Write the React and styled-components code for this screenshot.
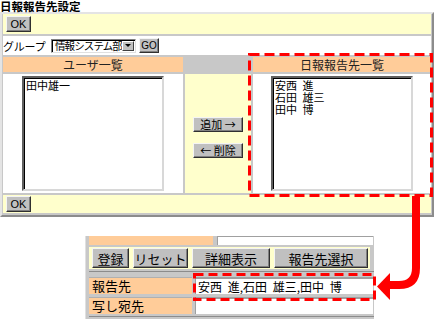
import React from "react";
import styled, { createGlobalStyle } from "styled-components";

const GlobalStyle = createGlobalStyle`
  html, body {
    margin: 0;
    padding: 0;
    background: #fff;
  }
  body {
    font-family: "Noto Sans CJK JP", "Noto Sans", sans-serif;
    font-size: 12px;
    color: #000;
  }
`;

const Page = styled.div`
  position: relative;
  width: 435px;
  height: 319px;
  overflow: hidden;
`;

const Title = styled.h1`
  margin: 0;
  height: 12px;
  font-size: 11.5px;
  line-height: 12px;
  font-weight: bold;
`;

//Main form table
const Panel = styled.div`
  box-sizing: border-box;
  width: 434px;
  border: 2px solid;
  border-color: #e4e4e4 #8c8c8c #8c8c8c #e4e4e4;
  background: #c8c8c8;
  padding: 0 1px 2px 1px;
  display: grid;
  grid-template-columns: 180px 66px 178px;
  grid-template-rows: 20px 19px 15px 119px 18px;
  gap: 2px;
`;

const BarRow = styled.div`
  grid-column: 1 / -1;
  background: #ffffcc;
  display: flex;
  align-items: center;
  padding-left: 3px;
`;

const GroupRow = styled.div`
  grid-column: 1 / -1;
  background: #fff;
  display: flex;
  align-items: center;
  gap: 3px;
`;

const GroupLabel = styled.span`
  font-size: 11px;
  letter-spacing: -0.2px;
  width: 45px;
`;

const Select = styled.div`
  box-sizing: border-box;
  width: 85px;
  height: 14px;
  background: #fff;
  border: 1px solid;
  border-color: #808080 #e0e0e0 #e0e0e0 #808080;
  box-shadow: inset 1px 1px #000;
  display: flex;
  align-items: center;
  justify-content: space-between;
  padding: 0 1px 0 3px;
`;

const SelectText = styled.span`
  font-size: 10.5px;
  letter-spacing: -0.9px;
  line-height: 12px;
`;

const SelectArrow = styled.span`
  box-sizing: border-box;
  width: 12px;
  height: 10px;
  background: #c0c0c0;
  border: 1px solid;
  border-color: #fff #404040 #404040 #fff;
  display: flex;
  align-items: center;
  justify-content: center;

  &::after {
    content: "";
    border-left: 3px solid transparent;
    border-right: 3px solid transparent;
    border-top: 3px solid #000;
  }
`;

const Btn = styled.button`
  box-sizing: border-box;
  margin: 0;
  padding: 0;
  width: ${(p) => p.$w}px;
  height: ${(p) => p.$h}px;
  font-family: ${(p) =>
    p.$latin
      ? '"Liberation Sans", Arial, sans-serif'
      : '"Noto Sans CJK JP", sans-serif'};
  font-size: ${(p) => p.$size || 11}px;
  line-height: 1;
  color: #000;
  background: #c0c0c0;
  border: 1px solid;
  border-color: #f4f4f4 #303030 #303030 #f4f4f4;
  box-shadow: inset -1px -1px #808080;
  white-space: nowrap;
`;

const Head = styled.div`
  background: ${(p) => (p.$blank ? "transparent" : "#ffcc99")};
  text-align: center;
  font-size: 12px;
  line-height: 15px;
  color: #222;
`;

const ListCell = styled.div`
  background: #fff;
  display: flex;
  justify-content: center;
  align-items: center;
`;

const ListBox = styled.div`
  box-sizing: border-box;
  width: 142px;
  height: 115px;
  background: #fff;
  border: 2px solid;
  border-color: #606060 #d8d8d8 #d8d8d8 #606060;
  box-shadow: inset 1px 1px #000;
  padding: 1px 0 0 2px;
  font-size: 11px;
  line-height: 12px;
  word-spacing: 3px;
`;

const Item = styled.div`
  height: 12px;
  white-space: nowrap;
`;

const MoveCell = styled.div`
  background: #ffffcc;
  display: flex;
  flex-direction: column;
  align-items: center;
  padding-top: 43px;
  gap: 11px;
`;

//Lower screen piece
const SubPanel = styled.div`
  box-sizing: border-box;
  margin: 19px 0 0 85px;
  width: 289px;
  background: #c8c8c8;
  border-left: 1px solid #e0e0e0;
  padding: 0 0 4px 3px;
`;

const TopStrip = styled.div`
  display: grid;
  grid-template-columns: 124px 156px;
  column-gap: 4px;
  height: 9px;
`;

const Cut = styled.div`
  background: ${(p) => (p.$white ? "#fff" : "#ffcc99")};
  border-top: ${(p) => (p.$white ? "1px solid #a0a0a0" : "none")};
  border-left: ${(p) => (p.$white ? "1px solid #a0a0a0" : "none")};
`;

const ButtonBar = styled.div`
  margin-top: 2px;
  background: #ffffcc;
  height: 22px;
  display: flex;
  align-items: center;
  gap: 4px;
  padding-left: 3px;
  width: 281px;
  box-sizing: border-box;
`;

const Fields = styled.div`
  margin-top: 2px;
  border-top: 1px solid #8c8c8c;
  padding: 5px 0 2px;
  border-bottom: 1px solid #8c8c8c;
  display: grid;
  grid-template-columns: 103px 178px;
  grid-auto-rows: 17px;
  gap: 3px;
`;

const Label = styled.div`
  background: #ffcc99;
  border-top: 1px solid #b0b0b0;
  font-size: 13px;
  line-height: 16px;
  padding-left: 3px;
`;

const Value = styled.div`
  background: #fff;
  border-top: 2px solid #a0a0a0;
  border-left: 1px solid #a0a0a0;
  font-size: 12px;
  line-height: 15px;
  padding-left: 2px;
  word-spacing: 3px;
  white-space: nowrap;
`;

const Marks = styled.svg`
  position: absolute;
  left: 0;
  top: 0;
  pointer-events: none;
`;

const picked = ["安西 進", "石田 雄三", "田中 博"];

export default function App() {
  return (
    <>
      <GlobalStyle />
      <Page>
        <Title>日報報告先設定</Title>
        <Panel>
          <BarRow>
            <Btn $w={25} $h={16} $latin>
              OK
            </Btn>
          </BarRow>
          <GroupRow>
            <GroupLabel>グループ</GroupLabel>
            <Select>
              <SelectText>情報システム部</SelectText>
              <SelectArrow />
            </Select>
            <Btn $w={20} $h={15} $latin $size={10}>
              GO
            </Btn>
          </GroupRow>
          <Head>ユーザ一覧</Head>
          <Head $blank />
          <Head>日報報告先一覧</Head>
          <ListCell>
            <ListBox>
              <Item>田中雄一</Item>
            </ListBox>
          </ListCell>
          <MoveCell>
            <Btn $w={50} $h={15}>
              追加 →
            </Btn>
            <Btn $w={50} $h={15}>
              ← 削除
            </Btn>
          </MoveCell>
          <ListCell>
            <ListBox>
              {picked.map((name) => (
                <Item key={name}>{name}</Item>
              ))}
            </ListBox>
          </ListCell>
          <BarRow>
            <Btn $w={25} $h={16} $latin>
              OK
            </Btn>
          </BarRow>
        </Panel>

        <SubPanel>
          <TopStrip>
            <Cut />
            <Cut $white />
          </TopStrip>
          <ButtonBar>
            <Btn $w={37} $h={20} $size={13}>
              登録
            </Btn>
            <Btn $w={55} $h={20} $size={13}>
              リセット
            </Btn>
            <Btn $w={78} $h={20} $size={13}>
              詳細表示
            </Btn>
            <Btn $w={94} $h={20} $size={13}>
              報告先選択
            </Btn>
          </ButtonBar>
          <Fields>
            <Label>報告先</Label>
            <Value>{picked.join(",")}</Value>
            <Label>写し宛先</Label>
            <Value />
          </Fields>
        </SubPanel>

        <Marks width="435" height="319" viewBox="0 0 435 319">
          <rect
            x="249.5"
            y="54.5"
            width="182"
            height="141"
            fill="none"
            stroke="#ff0000"
            strokeWidth="3"
            strokeDasharray="10 5"
          />
          <rect
            x="194.5"
            y="274.5"
            width="180"
            height="25"
            fill="none"
            stroke="#ff0000"
            strokeWidth="3"
            strokeDasharray="9 5"
          />
          <path
            d="M416 196 V268 Q416 285 399 285 H388"
            fill="none"
            stroke="#ff0000"
            strokeWidth="8"
          />
          <polygon points="390,273 390,300 377,286.5" fill="#ff0000" />
        </Marks>
      </Page>
    </>
  );
}
